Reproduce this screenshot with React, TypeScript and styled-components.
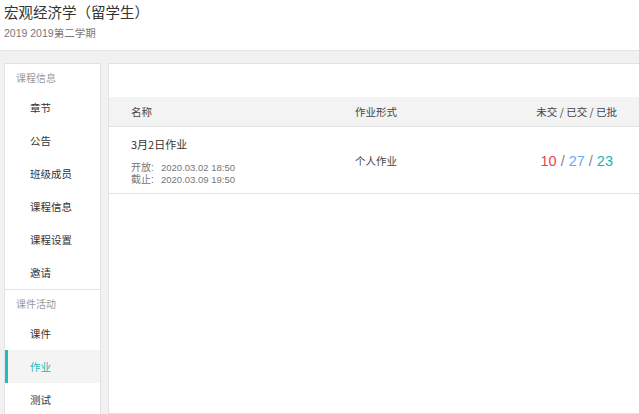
import React from 'react'
import styled, { createGlobalStyle } from 'styled-components'

const GlobalStyle = createGlobalStyle`
  html, body {
    margin: 0;
    padding: 0;
    background: #f1f1f1;
    overflow: hidden;
    font-family: "Liberation Sans", "Noto Sans CJK SC", sans-serif;
    color: #333;
  }
`

interface NavItem {
  label: string
  active?: boolean
}

interface NavSection {
  title: string
  items: NavItem[]
}

const sections: NavSection[] = [
  {
    title: '课程信息',
    items: [{ label: '章节' }, { label: '公告' }, { label: '班级成员' }, { label: '课程信息' }, { label: '课程设置' }, { label: '邀请' }],
  },
  {
    title: '课件活动',
    items: [{ label: '课件' }, { label: '作业', active: true }, { label: '测试' }],
  },
]

const App: React.FC = () => {
  return (
    <>
      <GlobalStyle />
      <StyledPage>
        <StyledHeader>
          <StyledTitle>宏观经济学（留学生）</StyledTitle>
          <StyledTerm>2019 2019第二学期</StyledTerm>
        </StyledHeader>
        <StyledBody>
          <StyledSidebar>
            {sections.map((section, i) => (
              <StyledSection key={section.title} first={i === 0}>
                <StyledSectionTitle>{section.title}</StyledSectionTitle>
                {section.items.map((item) => (
                  <StyledNavItem key={item.label} active={item.active}>
                    {item.label}
                  </StyledNavItem>
                ))}
              </StyledSection>
            ))}
          </StyledSidebar>
          <StyledMain>
            <StyledToolbar />
            <StyledTableHead>
              <div>名称</div>
              <div>作业形式</div>
              <StyledRight>未交 / 已交 / 已批</StyledRight>
            </StyledTableHead>
            <StyledRow>
              <div>
                <StyledTaskName>3月2日作业</StyledTaskName>
                <StyledTime>
                  <StyledTimeLabel>开放:</StyledTimeLabel>
                  <span>2020.03.02 18:50</span>
                  <StyledTimeLabel>截止:</StyledTimeLabel>
                  <span>2020.03.09 19:50</span>
                </StyledTime>
              </div>
              <StyledForm>个人作业</StyledForm>
              <StyledCounts>
                <StyledCount tone="#f0424f">10</StyledCount>
                <StyledSlash>/</StyledSlash>
                <StyledCount tone="#6aabf3">27</StyledCount>
                <StyledSlash>/</StyledSlash>
                <StyledCount tone="#17b5b5">23</StyledCount>
              </StyledCounts>
            </StyledRow>
          </StyledMain>
        </StyledBody>
      </StyledPage>
    </>
  )
}

const StyledPage = styled.div`
  min-width: 650px;
  height: 414px;
  display: flex;
  flex-direction: column;
  overflow: hidden;
`

const StyledHeader = styled.div`
  flex-shrink: 0;
  background: #fff;
  height: 51px;
  box-sizing: border-box;
  padding: 3px 0 0 4px;
  border-bottom: 1px solid #e4e4e4;
`

const StyledTitle = styled.div`
  font-family: "Noto Sans CJK SC", sans-serif;
  font-size: 14.5px;
  line-height: 18px;
  color: #333;
`

const StyledTerm = styled.div`
  font-size: 10.5px;
  line-height: 16px;
  margin-top: 4px;
  color: #777;
`

const StyledBody = styled.div`
  flex: 1;
  min-height: 0;
  display: flex;
  align-items: flex-start;
  gap: 7px;
  padding: 12px 0 0 4px;
`

const StyledSidebar = styled.div`
  width: 97px;
  box-sizing: border-box;
  background: #fff;
  border: 1px solid #e2e2e2;
  border-bottom: none;
  flex-shrink: 0;
`

const StyledSection = styled.div<{ first?: boolean }>`
  border-top: ${(p) => (p.first ? 'none' : '1px solid #e2e2e2')};
`

const StyledSectionTitle = styled.div`
  font-family: "Noto Sans CJK SC", sans-serif;
  font-size: 10px;
  color: #999;
  height: 27px;
  line-height: 27px;
  padding-left: 11px;
`

const StyledNavItem = styled.div<{ active?: boolean }>`
  font-family: "Noto Sans CJK SC", sans-serif;
  font-size: 10.5px;
  height: 33px;
  line-height: 33px;
  padding-left: 25px;
  color: ${(p) => (p.active ? '#1fb6b6' : '#333')};
  background: ${(p) => (p.active ? '#f4f4f4' : 'transparent')};
  box-shadow: ${(p) => (p.active ? 'inset 3px 0 0 #22bcbc' : 'none')};
`

const StyledMain = styled.div`
  flex: 1;
  background: #fff;
  border: 1px solid #e2e2e2;
  align-self: stretch;
`

const StyledToolbar = styled.div`
  height: 33px;
`

const StyledTableHead = styled.div`
  display: grid;
  grid-template-columns: 224px 1fr auto;
  align-items: center;
  height: 29px;
  padding: 0 32px 0 22px;
  background: #f3f3f3;
  border-bottom: 1px solid #e3e3e3;
  font-family: "Noto Sans CJK SC", sans-serif;
  font-size: 10.5px;
  color: #444;
`

const StyledRight = styled.div`
  text-align: right;
`

const StyledRow = styled.div`
  display: grid;
  grid-template-columns: 224px 1fr auto;
  align-items: center;
  box-sizing: border-box;
  height: 67px;
  padding: 1px 36px 0 22px;
  border-bottom: 1px solid #e3e3e3;
`

const StyledTaskName = styled.div`
  font-family: "Noto Sans CJK SC", sans-serif;
  font-size: 11px;
  line-height: 16px;
  color: #333;
  margin-bottom: 10px;
`

const StyledTime = styled.div`
  display: grid;
  grid-template-columns: 30px auto;
  font-size: 9.5px;
  line-height: 12px;
  color: #777;
`

const StyledTimeLabel = styled.span`
  font-size: 10px;
`

const StyledForm = styled.div`
  font-family: "Noto Sans CJK SC", sans-serif;
  font-size: 10.5px;
  color: #444;
`

const StyledCounts = styled.div`
  display: flex;
  align-items: baseline;
  gap: 4px;
  font-size: 14.5px;
`

const StyledCount = styled.span<{ tone: string }>`
  color: ${(p) => p.tone};
`

const StyledSlash = styled.span`
  color: #888;
`

export default App
